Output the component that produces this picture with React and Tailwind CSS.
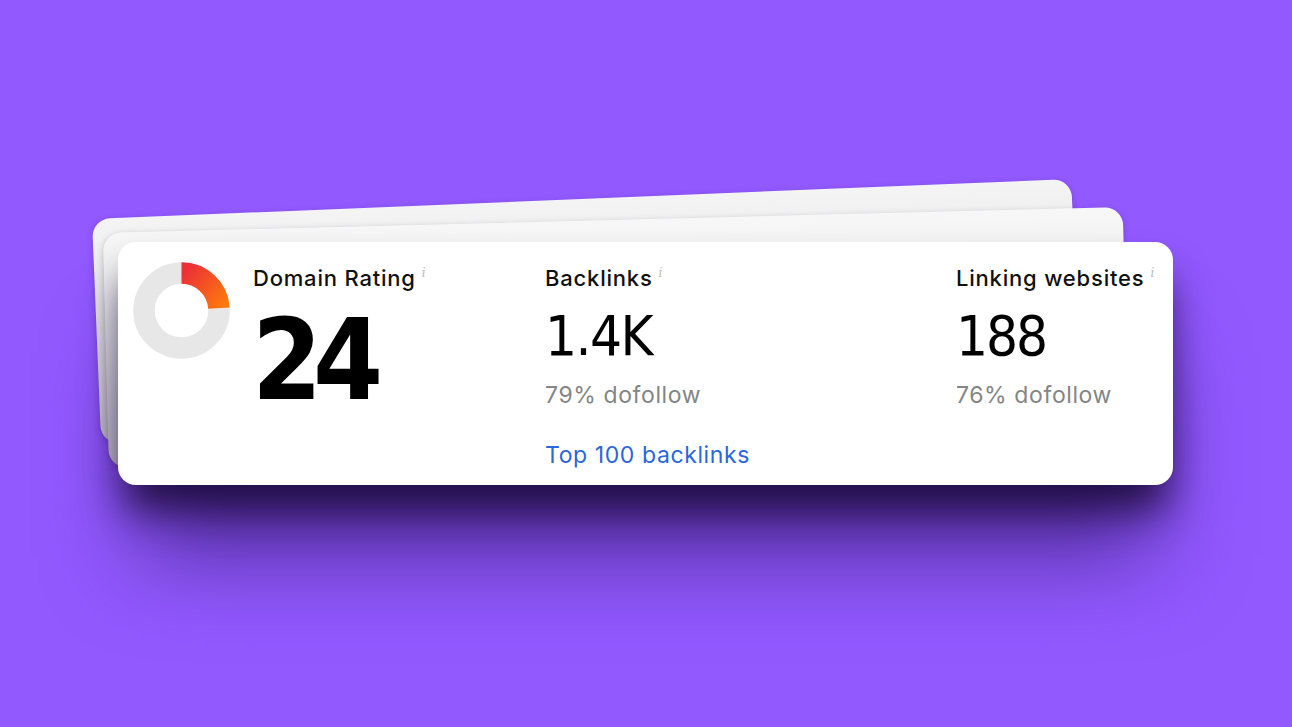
import React from "react";

const sans = "font-['Inter','Noto_Sans',sans-serif]";
const num = "font-['DejaVu_Sans_Condensed','DejaVu_Sans',sans-serif]";

function Info() {
   return (
      <span className="ml-[6px] -translate-y-[9px] inline-block font-['DejaVu_Serif',serif] text-[12px] italic text-[#b9b9b9]">
         i
      </span>
   );
}

function Donut() {
   // 24% of the ring, starting at 12 o'clock
   return (
      <svg width="97" height="97" viewBox="0 0 97 97" className="shrink-0">
         <defs>
            <linearGradient id="dr" gradientUnits="userSpaceOnUse" x1="52" y1="10" x2="92" y2="44">
               <stop offset="0%" stopColor="#ec3135" />
               <stop offset="100%" stopColor="#ff7a0c" />
            </linearGradient>
         </defs>
         <circle cx="48.5" cy="48.5" r="37.5" fill="none" stroke="#e7e7e7" strokeWidth="21.5" />
         <path
            d="M 48.5 11 A 37.5 37.5 0 0 1 85.93 46.15"
            fill="none"
            stroke="url(#dr)"
            strokeWidth="21.5"
         />
      </svg>
   );
}

export default function App() {
   return (
      <div className={`w-full h-[727px] overflow-hidden bg-[#9259ff] pt-[242px] pl-[118px] ${sans}`}>
         <div className="relative w-[1055px] h-[243px]">
            {/* cards stacked behind */}
            <div className="absolute left-[-26px] top-[-23px] w-[980px] h-[225px] origin-top-left -rotate-[2.34deg] rounded-[18px] bg-gradient-to-b from-[#f4f4f4] to-[#d6d6d6] shadow-[0_2px_6px_rgba(40,20,80,0.25)]" />
            <div className="absolute left-[-15px] top-[-9px] w-[1020px] h-[235px] origin-top-left -rotate-[1.46deg] rounded-[18px] bg-gradient-to-b from-[#f7f7f7] to-[#dedede] shadow-[0_2px_6px_rgba(40,20,80,0.25)]" />

            <div className="relative h-full rounded-[18px] bg-white shadow-[0_30px_40px_-6px_rgba(22,8,50,0.85),0_90px_90px_-20px_rgba(40,15,90,0.6)] flex items-start pl-[15px] pt-[20px]">
               <Donut />

               <div className="ml-[23px] w-[292px] pt-[1px]">
                  <div className="text-[22px] leading-[30px] font-medium text-[#111] tracking-[0.8px]">
                     Domain Rating
                     <Info />
                  </div>
                  <div className={`${num} mt-[13px] font-bold text-[112px] leading-[100px] text-black tracking-[-9px] -ml-[1px]`}>
                     24
                  </div>
               </div>

               <div className="w-[411px] pt-[1px]">
                  <div className="text-[22px] leading-[30px] font-medium text-[#111] tracking-[0.8px]">
                     Backlinks
                     <Info />
                  </div>
                  <div className={`${num} mt-[9px] text-[56px] leading-[60px] text-black tracking-[-1.5px]`}>
                     1.4K
                  </div>
                  <div className="mt-[14px] text-[23px] leading-[30px] text-[#858585] tracking-[0.6px]">
                     79% dofollow
                  </div>
                  <div className="mt-[30px] text-[23px] leading-[30px] text-[#2a66dd] tracking-[0.6px]">
                     Top 100 backlinks
                  </div>
               </div>

               <div className="pt-[1px]">
                  <div className="text-[22px] leading-[30px] font-medium text-[#111] tracking-[0.8px]">
                     Linking websites
                     <Info />
                  </div>
                  <div className={`${num} mt-[9px] text-[56px] leading-[60px] text-black tracking-[-2px]`}>
                     188
                  </div>
                  <div className="mt-[14px] text-[23px] leading-[30px] text-[#858585] tracking-[0.6px]">
                     76% dofollow
                  </div>
               </div>
            </div>
         </div>
      </div>
   );
}
